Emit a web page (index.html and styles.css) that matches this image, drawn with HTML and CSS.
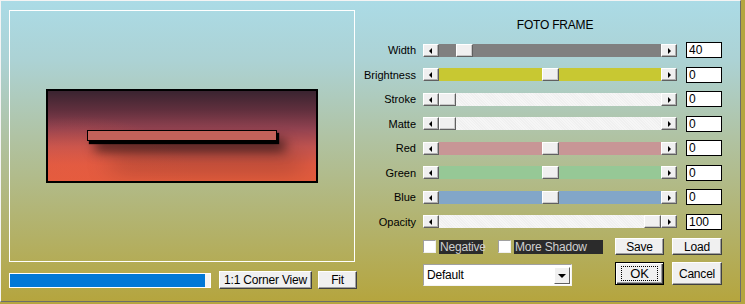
FILE: index.html
```html
<!DOCTYPE html>
<html lang="en">
<head>
    <title>Foto Frame</title>
    <link rel="stylesheet" href="styles.css">
</head>
<body>
    <div class="dialog">
        <div class="preview-pane">
            <div class="preview-frame">
                <div class="picture">
                    <div class="picture-bar"></div>
                </div>
            </div>
            <div class="preview-footer">
                <div class="progress"><div class="progress-fill" style="width: 195px"></div></div>
                <button class="btn btn-corner">1:1 Corner View</button>
                <button class="btn btn-fit">Fit</button>
            </div>
        </div>

        <div class="controls">
            <div class="title">FOTO FRAME</div>

            <div class="row">
                <div class="label">Width</div>
                <div class="slider">
                    <span class="arrow arrow-left"></span>
                    <div class="track track-gray"><span class="thumb" style="left: 17px"></span></div>
                    <span class="arrow arrow-right"></span>
                </div>
                <input class="value" type="text" value="40">
            </div>
            <div class="row">
                <div class="label">Brightness</div>
                <div class="slider">
                    <span class="arrow arrow-left"></span>
                    <div class="track track-yellow"><span class="thumb" style="left: 103px"></span></div>
                    <span class="arrow arrow-right"></span>
                </div>
                <input class="value" type="text" value="0">
            </div>
            <div class="row">
                <div class="label">Stroke</div>
                <div class="slider">
                    <span class="arrow arrow-left"></span>
                    <div class="track track-white"><span class="thumb" style="left: 0px"></span></div>
                    <span class="arrow arrow-right"></span>
                </div>
                <input class="value" type="text" value="0">
            </div>
            <div class="row">
                <div class="label">Matte</div>
                <div class="slider">
                    <span class="arrow arrow-left"></span>
                    <div class="track track-white"><span class="thumb" style="left: 0px"></span></div>
                    <span class="arrow arrow-right"></span>
                </div>
                <input class="value" type="text" value="0">
            </div>
            <div class="row">
                <div class="label">Red</div>
                <div class="slider">
                    <span class="arrow arrow-left"></span>
                    <div class="track track-red"><span class="thumb" style="left: 103px"></span></div>
                    <span class="arrow arrow-right"></span>
                </div>
                <input class="value" type="text" value="0">
            </div>
            <div class="row">
                <div class="label">Green</div>
                <div class="slider">
                    <span class="arrow arrow-left"></span>
                    <div class="track track-green"><span class="thumb" style="left: 103px"></span></div>
                    <span class="arrow arrow-right"></span>
                </div>
                <input class="value" type="text" value="0">
            </div>
            <div class="row">
                <div class="label">Blue</div>
                <div class="slider">
                    <span class="arrow arrow-left"></span>
                    <div class="track track-blue"><span class="thumb" style="left: 103px"></span></div>
                    <span class="arrow arrow-right"></span>
                </div>
                <input class="value" type="text" value="0">
            </div>
            <div class="row">
                <div class="label">Opacity</div>
                <div class="slider">
                    <span class="arrow arrow-left"></span>
                    <div class="track track-white"><span class="thumb" style="left: 205px"></span></div>
                    <span class="arrow arrow-right"></span>
                </div>
                <input class="value" type="text" value="100">
            </div>

            <div class="option-row">
                <span class="checkbox"></span>
                <span class="check-label check-negative">Negative</span>
                <span class="checkbox checkbox-second"></span>
                <span class="check-label check-shadow">More Shadow</span>
                <button class="btn btn-save">Save</button>
                <button class="btn btn-load">Load</button>
            </div>

            <div class="bottom-row">
                <div class="dropdown">
                    <span class="dropdown-text">Default</span>
                    <span class="dropdown-arrow"></span>
                </div>
                <button class="btn btn-ok"><span class="focus">OK</span></button>
                <button class="btn btn-cancel">Cancel</button>
            </div>
        </div>
    </div>
</body>
</html>
```

FILE: styles.css
```css
/* 다이얼로그 */
body {
    margin: 0;
    font-family: "Liberation Sans", Arial, sans-serif;
    font-size: 11px;
    letter-spacing: -0.2px;
    background: #b4a640;
}

.dialog {
    display: flex;
    width: 741px;
    height: 302px;
    box-sizing: border-box;
    border: 1px solid;
    border-color: #f4f4f4 #6c6c6c #6c6c6c #f4f4f4;
    background: linear-gradient(#abdbe6 0%, #acd2d4 20%, #b0c3a4 45%, #b2b576 70%, #b5a53e 100%);
}

/* 미리보기 */
.preview-pane {
    width: 354px;
    flex-shrink: 0;
    padding: 9px 0 0 8px;
    box-sizing: border-box;
}

.preview-frame {
    width: 346px;
    height: 252px;
    box-sizing: border-box;
    border: 1px solid #fff;
    display: flex;
    justify-content: center;
    align-items: center;
}

.picture {
    width: 272px;
    height: 94px;
    box-sizing: border-box;
    border: 2px solid #000;
    padding: 39px 0 0 39px;
    overflow: hidden;
    background:
        radial-gradient(ellipse 120px 70px at 30px 95px, rgba(232, 92, 64, 0.6), rgba(232, 92, 64, 0)),
        linear-gradient(#3a2430 0%, #62303e 22%, #914250 42%, #c25450 62%, #df5a42 82%, #e25c3c 100%);
}

.picture-bar {
    width: 190px;
    height: 11px;
    box-sizing: border-box;
    border: 1px solid #000;
    background: #c4625a;
    box-shadow: 2px 3px 1px #000, 8px 10px 12px rgba(0, 0, 0, 0.65), 24px 26px 24px rgba(0, 0, 0, 0.35);
}

.preview-footer {
    display: flex;
    align-items: center;
    margin-top: 9px;
    height: 18px;
    width: 360px;
}

.progress {
    width: 202px;
    height: 15px;
    box-sizing: border-box;
    border: 1px solid #fff;
    background: #f4f4f4;
    margin-right: 8px;
}

.progress-fill {
    height: 100%;
    background: #0078d7;
}

/* 버튼 */
.btn {
    font-family: "Liberation Sans", Arial, sans-serif;
    font-size: 12px;
    letter-spacing: -0.2px;
    color: #000;
    background: #f0f0f0;
    border: 1px solid;
    border-color: #fff #404040 #404040 #fff;
    box-shadow: inset -1px -1px #a0a0a0;
    padding: 0;
    margin: 0;
    flex-shrink: 0;
}

.btn-corner {
    width: 93px;
    height: 18px;
    margin-right: 6px;
}

.btn-fit {
    width: 39px;
    height: 18px;
}

/* 컨트롤 */
.controls {
    flex: 1;
    padding-top: 18px;
}

.title {
    width: 400px;
    text-align: center;
    line-height: 13px;
    margin-bottom: 10px;
    font-size: 12px;
}

.row {
    display: flex;
    align-items: center;
    height: 16px;
    margin-bottom: 8.5px;
}

.label {
    width: 61px;
    text-align: right;
    margin-right: 7px;
    font-size: 11px;
    letter-spacing: 0;
}

.slider {
    display: flex;
    width: 254px;
    height: 13px;
    margin-right: 9px;
}

.arrow {
    width: 16px;
    height: 13px;
    box-sizing: border-box;
    background: #f0f0f0;
    border: 1px solid;
    border-color: #fff #606060 #606060 #fff;
    box-shadow: inset -1px -1px #b0b0b0;
    position: relative;
}

.arrow::after {
    content: "";
    position: absolute;
    top: 3px;
    left: 5px;
    border-top: 3px solid transparent;
    border-bottom: 3px solid transparent;
}

.arrow-left::after {
    border-right: 3px solid #000;
}

.arrow-right::after {
    left: 6px;
    border-left: 3px solid #000;
}

.track {
    position: relative;
    width: 222px;
    height: 13px;
}

.track-gray { background: #808080; }
.track-yellow { background: #c8c832; }
.track-white { background: repeating-linear-gradient(45deg, #f6f6f6 0, #f6f6f6 1px, #f0f0f0 1px, #f0f0f0 2px); }
.track-red { background: #c89696; }
.track-green { background: #96c896; }
.track-blue { background: #82a6c8; }

.thumb {
    position: absolute;
    top: 0;
    width: 17px;
    height: 13px;
    box-sizing: border-box;
    background: #f0f0f0;
    border: 1px solid;
    border-color: #fff #606060 #606060 #fff;
    box-shadow: inset -1px -1px #c8c8c8;
}

.value {
    width: 36px;
    height: 16px;
    box-sizing: border-box;
    border: 1px solid #000;
    background: #fff;
    padding: 0 2px;
    margin: 0;
    font-family: "Liberation Sans", Arial, sans-serif;
    font-size: 12px;
    outline: none;
}

/* 옵션 */
.option-row {
    display: flex;
    align-items: center;
    margin-top: 1.5px;
    padding-left: 68px;
    height: 17px;
}

.checkbox {
    width: 13px;
    height: 13px;
    box-sizing: border-box;
    background: #fff;
    border: 1px solid;
    border-color: #a0a0a0 #f0f0f0 #f0f0f0 #a0a0a0;
    margin-right: 3px;
}

.checkbox-second {
    margin-left: 15px;
}

.check-label {
    height: 14px;
    line-height: 14px;
    background: #2b2b2b;
    color: #d0d0d0;
    font-size: 12px;
    box-sizing: border-box;
    padding-left: 1px;
}

.check-negative { width: 44px; }
.check-shadow { width: 89px; }

.btn-save {
    width: 49px;
    height: 17px;
    margin-left: 12px;
}

.btn-load {
    width: 50px;
    height: 17px;
    margin-left: 8px;
}

.bottom-row {
    display: flex;
    align-items: flex-start;
    margin-top: 7px;
    padding-left: 68px;
}

.dropdown {
    display: flex;
    align-items: center;
    justify-content: space-between;
    width: 149px;
    height: 22px;
    margin-top: 2px;
    box-sizing: border-box;
    background: #fff;
    border: 1px solid;
    border-color: #a0a0a0 #f4f4f4 #f4f4f4 #a0a0a0;
    padding: 1px 1px 1px 3px;
    font-size: 12px;
}

.dropdown-arrow {
    width: 16px;
    height: 17px;
    box-sizing: border-box;
    background: #f0f0f0;
    border: 1px solid;
    border-color: #fff #606060 #606060 #fff;
    position: relative;
}

.dropdown-arrow::after {
    content: "";
    position: absolute;
    top: 6px;
    left: 3px;
    border-left: 4px solid transparent;
    border-right: 4px solid transparent;
    border-top: 4px solid #000;
}

.btn-ok {
    width: 49px;
    height: 23px;
    margin-left: 43px;
    border: 1px solid #000;
    box-shadow: inset 1px 1px #fff, inset -1px -1px #404040, inset -2px -2px #a0a0a0;
    font-size: 13px;
}

.focus {
    display: inline-block;
    width: 35px;
    height: 13px;
    line-height: 13px;
    border: 1px dotted #000;
}

.btn-cancel {
    width: 50px;
    height: 23px;
    margin-left: 8px;
    font-size: 12px;
}
```
